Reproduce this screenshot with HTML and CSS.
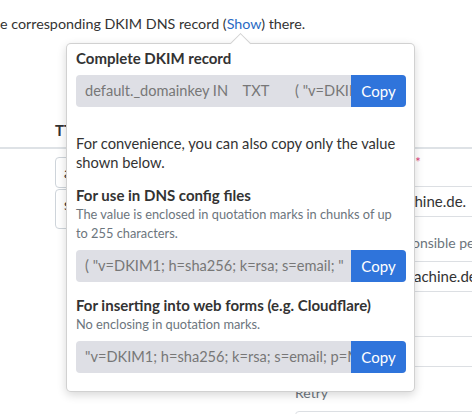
FILE: index.html
```html
<!DOCTYPE html>
<html lang="en">
<head>
  <meta charset="UTF-8">
  <title>DKIM</title>
  <link rel="stylesheet" href="styles.css">
</head>
<body>
  <p class="intro">e corresponding DKIM DNS record (<a href="#" class="show">Show</a>) there.</p>

  <div class="page">
    <div class="thead"><span class="th">TTL</span></div>
    <div class="form-grid">
      <div class="col-left">
        <div class="box">a</div>
        <div class="box tall">s</div>
      </div>
      <div class="col-right">
        <label class="lbl">Primary name server <span class="req">*</span></label>
        <div class="field">ns1.my-mailmachine.de.</div>
        <label class="lbl small indent">E-mail of the responsible person</label>
        <div class="field shifted">hostmaster.mailmachine.de</div>
        <label class="lbl small">Refresh</label>
        <div class="field"></div>
        <label class="lbl small">Retry</label>
        <div class="field"></div>
      </div>
    </div>
  </div>

  <div class="popover">
    <div class="arrow"></div>
    <h3 class="pop-title">Complete DKIM record</h3>
    <div class="input-group">
      <span class="value">default._domainkey IN&nbsp;&nbsp;&nbsp;&nbsp;TXT&nbsp;&nbsp;&nbsp;&nbsp;&nbsp;&nbsp;&nbsp;( "v=DKIM1; h=sha256; k=rsa;</span>
      <button class="copy">Copy</button>
    </div>
    <p class="note">For convenience, you can also copy only the value shown below.</p>

    <h3 class="pop-title sub">For use in DNS config files</h3>
    <p class="hint">The value is enclosed in quotation marks in chunks of up to 255 characters.</p>
    <div class="input-group">
      <span class="value">( "v=DKIM1; h=sha256; k=rsa; s=email; "&nbsp;&nbsp;"p=MIIBIjAN</span>
      <button class="copy">Copy</button>
    </div>

    <h3 class="pop-title sub">For inserting into web forms (e.g. Cloudflare)</h3>
    <p class="hint">No enclosing in quotation marks.</p>
    <div class="input-group">
      <span class="value">"v=DKIM1; h=sha256; k=rsa; s=email; p=MIIBIjANBgkq</span>
      <button class="copy">Copy</button>
    </div>
  </div>
</body>
</html>
```

FILE: styles.css
```css
html, body {
  margin: 0;
  overflow: hidden;
}
body {
  width: 472px;
  height: 414px;
  background: #fff;
  color: #333;
  font-family: Lato, 'Liberation Sans', sans-serif;
  font-size: 15px;
  position: relative;
}
.intro {
  margin: 0;
  padding-top: 14px;
  line-height: 20px;
  font-size: 14.3px;
}
.show {
  color: #2a6bc4;
  text-decoration: none;
}
.page {
  padding-top: 80px;
}
.thead {
  padding-left: 55px;
  height: 33px;
  line-height: 33px;
  border-bottom: 2px solid #dee2e6;
}
.th {
  font-weight: bold;
  font-size: 15px;
}
.form-grid {
  display: grid;
  grid-template-columns: 110px 1fr;
  column-gap: 130px;
  padding-left: 55px;
}
.col-left {
  padding-top: 8px;
}
.box {
  height: 29px;
  border: 1px solid #ced4da;
  border-radius: 4px;
  padding-left: 8px;
  line-height: 29px;
  margin-bottom: 1px;
}
.box.tall {
  height: 38px;
}
.col-right {
  margin-right: -200px;
}
.lbl {
  display: block;
  line-height: 22px;
  margin: 2px 0 13px;
  font-size: 13px;
  color: #6c757d;
  white-space: nowrap;
}
.lbl.small {
  margin: 15px 0 7px;
  font-size: 14px;
}
.lbl.indent {
  text-indent: 9px;
}
.req {
  color: #e0457b;
}
.field {
  height: 29px;
  border: 1px solid #dcdfe3;
  border-radius: 4px;
  padding-left: 12px;
  line-height: 29px;
  font-size: 15px;
}
.field.shifted {
  text-indent: -10px;
}

.popover {
  position: absolute;
  left: 66px;
  top: 43px;
  width: 330px;
  padding: 4px 8px 18px 9px;
  background: #fff;
  border: 1px solid rgba(0,0,0,0.18);
  border-radius: 5px;
  box-shadow: 0 3px 10px rgba(0,0,0,0.16);
}
.arrow {
  position: absolute;
  top: -8px;
  left: 166px;
  width: 14px;
  height: 14px;
  background: #fff;
  border-left: 1px solid rgba(0,0,0,0.18);
  border-top: 1px solid rgba(0,0,0,0.18);
  transform: rotate(45deg);
}
.pop-title {
  margin: 0;
  font-size: 15px;
  font-weight: bold;
  line-height: 20px;
  color: #333;
}
.pop-title.sub {
  margin-top: 13px;
}
.input-group {
  display: flex;
  height: 32px;
  margin-top: 7px;
  border-radius: 4px;
  overflow: hidden;
  background: #dedfe5;
}
.value {
  flex: 1;
  min-width: 0;
  overflow: hidden;
  white-space: nowrap;
  padding-left: 9px;
  padding-right: 6px;
  line-height: 32px;
  font-size: 14.6px;
  color: #777;
}
.copy {
  flex: none;
  width: 55px;
  border: none;
  background: #2f74db;
  color: #fff;
  font-family: inherit;
  font-size: 15px;
  padding: 0;
}
.note {
  margin: 27px 0 0;
  line-height: 19px;
  font-size: 14.7px;
}
.hint {
  margin: 0;
  font-size: 12.8px;
  line-height: 19px;
  color: #6c757d;
}
```
